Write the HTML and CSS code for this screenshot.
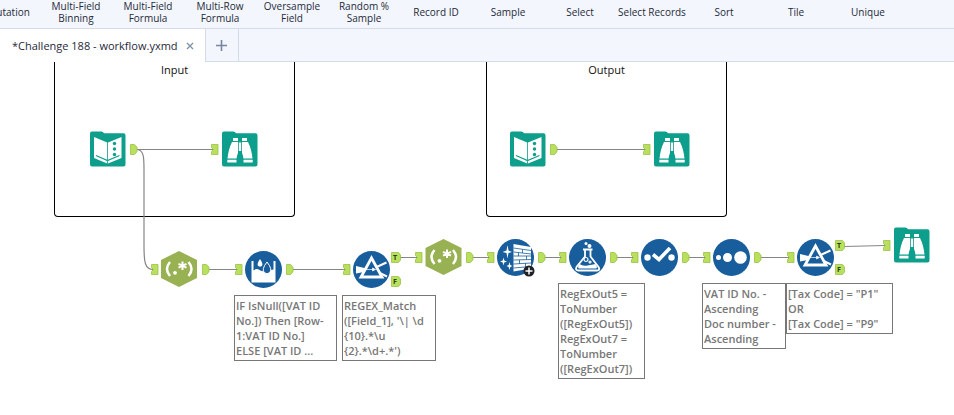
FILE: index.html
```html
<!DOCTYPE html>
<html lang="en">
<head>
<meta charset="utf-8">
<title>Challenge 188 - workflow.yxmd</title>
<link rel="stylesheet" href="styles.css">
</head>
<body>
<nav class="palette" aria-label="Tools">
  <button class="tool" type="button">Imputation</button>
  <button class="tool" type="button">Multi-Field Binning</button>
  <button class="tool" type="button">Multi-Field Formula</button>
  <button class="tool" type="button">Multi-Row Formula</button>
  <button class="tool" type="button">Oversample Field</button>
  <button class="tool" type="button">Random % Sample</button>
  <button class="tool" type="button">Record ID</button>
  <button class="tool" type="button">Sample</button>
  <button class="tool" type="button">Select</button>
  <button class="tool" type="button">Select Records</button>
  <button class="tool" type="button">Sort</button>
  <button class="tool" type="button">Tile</button>
  <button class="tool" type="button">Unique</button>
</nav>
<div class="tabs">
  <div class="tab">
    <span class="tab-name">*Challenge 188 - workflow.yxmd</span>
    <button class="tab-close" type="button" aria-label="Close tab">
      <svg width="8" height="8" viewBox="0 0 8 8"><path d="M1 1L7 7M7 1L1 7" stroke="#7d8fa8" stroke-width="1.3" fill="none"/></svg>
    </button>
  </div>
  <button class="tab-add" type="button" aria-label="New workflow">
    <svg width="11" height="11" viewBox="0 0 11 11"><path d="M5.5 0V11M0 5.5H11" stroke="#76879f" stroke-width="1.6" fill="none"/></svg>
  </button>
</div>
<main class="canvas">
  <section class="container container-input"><h2 class="container-title">Input</h2></section>
  <section class="container container-output"><h2 class="container-title">Output</h2></section>

  <svg class="graph" width="954" height="353" viewBox="0 62 954 353">
    <defs>
      <g id="out"><path d="M.5 .5H4.5L7 3.2V7.8L4.500 10.500H.5Z" fill="#b9e05c" stroke="#9cc04a" stroke-width=".8"/></g>
      <g id="in"><path d="M.5 .5H7V10.500H.5V7.500L2.500 5.500L.5 3.500Z" fill="#b9e05c" stroke="#9cc04a" stroke-width=".8"/></g>
      <g id="flag"><path d="M.5 .5H7.500L9.500 3V8L7.500 10.500H.5Z" fill="#b9e05c" stroke="#9cc04a" stroke-width=".8"/></g>
      <g id="folder"><path d="M0 2.500Q0 .5 2 .5H11.500Q13 .5 14 2.300H33.500Q35.500 2.300 35.500 4.300V33.500Q35.500 35.500 33.500 35.500H2Q0 35.500 0 33.500Z" fill="#0d9f8c"/></g>
      <g id="input">
        <use href="#folder"/>
        <path d="M4 6L17.200 11.500V32.500L4 27Z M18 11.500L31.500 6V27L18 32.500Z" fill="#fff"/>
        <path d="M6 24.500L17.500 29.500L29.500 24.500" fill="none" stroke="#0d9f8c" stroke-width="1.200"/>
        <g fill="#0d9f8c"><circle cx="24.500" cy="12.500" r="1.700"/><circle cx="24.500" cy="18" r="1.700"/><circle cx="24.500" cy="23.500" r="1.700"/></g>
      </g>
      <g id="browse">
        <use href="#folder"/>
        <path d="M11 7H16V10H11Z M20 7H25V10H20Z M10 11H16V22Q15 24 14.500 27.500H5.500Q6.500 18 10 11Z M20 11H26Q29.500 18 30.500 27.500H21.500Q21 24 20 22Z M16.800 11.500H19.200V20H16.800Z M5.300 28.700H14.500V31.500H5.300Z M21.500 28.700H30.700V31.500H21.500Z" fill="#fff"/>
      </g>
      <g id="regex">
        <path d="M0 -18L18 -9V9L0 18L-18 9V-9Z" fill="#98b153"/>
        <g fill="none" stroke="#fff" stroke-width="2.500">
          <path d="M-9 -7Q-15 0 -9 7M9.500 -7Q15.500 0 9.500 7"/>
          <path d="M3.500 -7.500V1M-.5 -5.200L7.500 -1.300M7.500 -5.200L-.5 -1.300" stroke-width="2"/>
        </g>
        <circle cx="-4" cy="3.800" r="1.900" fill="#fff"/>
      </g>
      <g id="multirow">
        <circle r="18.500" fill="#185d9c"/>
        <path d="M-12 -8.500H-10V1Q-7 -1.500 -4 .5T2 1.500T10 0V-8.500H12V13H-12Z" fill="#fff"/>
        <path d="M-3.500 -10.500Q-7 -5.500 -5.500 -3.800Q-3.500 -2 -1.500 -3.800Q0 -5.500 -3.500 -10.500Z" fill="#fff"/>
        <path d="M3.500 -7.500Q-2.500 0 1 3.200Q3.500 5.200 6 3.200Q9.500 0 3.500 -7.500Z" fill="#185d9c" stroke="#fff" stroke-width="1"/>
      </g>
      <g id="filter">
        <circle r="18.500" fill="#185d9c"/>
        <path d="M-15.500 -3.500L-5 -1V2L-15.500 4Z" fill="#fff"/>
        <path d="M4 -2L15 -7M5 2L15.500 7" stroke="#fff" stroke-width="2"/>
        <path d="M0 -11.500L10.500 7.500H-10.500Z" fill="#185d9c" stroke="#fff" stroke-width="2.800"/>
        <path d="M-6 0H1M1 -1.500L4 0L1 1.500Z" fill="#fff" stroke="#fff" stroke-width=".7"/>
      </g>
      <g id="cleanse">
        <circle r="18.500" fill="#185d9c"/>
        <path d="M-2 -13.500L15.500 -10.500V11L-2 14Z" fill="#fff"/>
        <path d="M-2 -9.500L15.500 -7M-2 -5.500L15.500 -3.500M-2 -1.500H15.500M-2 2.500L15.500 2M-2 6.500L15.500 5.500M-2 10.500L15.500 9M7 -8V-4.500M3 -5V-1.500M11 -1.500V2M4 2.500V6.500M10 5.500V9.500" stroke="#185d9c" stroke-width=".8" fill="none"/>
        <path d="M-8 -12.500L-7 -7L-3.500 -5.500L-7 -4.500L-8 1L-9 -4.500L-13 -5.500L-9 -7Z M-12 0L-11.200 3L-8.500 4L-11.200 5L-12 8L-12.800 5L-15.500 4L-12.800 3Z M-6 4.500L-5.200 7.500L-3 8.500L-5.200 9.500L-6 12.500L-6.800 9.500L-9 8.500L-6.800 7.500Z" fill="#fff"/>
        <circle cx="13.500" cy="13.500" r="5.500" fill="#1e2226"/>
        <path d="M13.500 10V17M10 13.500H17" stroke="#fff" stroke-width="1.500"/>
      </g>
      <g id="formula">
        <circle r="18.500" fill="#185d9c"/>
        <path d="M-4.500 -8H5M-2.500 -8V-1L-11 9.500Q-12.500 13 -9 13H9.500Q13 13 11 9.500L3 -1V-8" fill="#185d9c" stroke="#fff" stroke-width="1.800"/>
        <path d="M-8 6.500Q-4.500 9 0 8T8 6.500L9.500 9.500Q9.500 11 8 11H-8Q-9.500 11 -9.500 9.500Z" fill="#fff"/>
        <g fill="none" stroke="#fff" stroke-width="1.200"><circle cx="-1.500" cy="2" r="2"/><circle cx="2.500" cy="4.500" r="1"/></g>
        <g fill="#fff"><circle cx="-1.500" cy="-14" r="1.500"/><circle cx="2" cy="-11.500" r="2"/></g>
      </g>
      <g id="select">
        <circle r="18.500" fill="#185d9c"/>
        <circle cx="-12" cy="0" r="3.200" fill="#fff"/><circle cx="12" cy="0" r="3.200" fill="#fff"/>
        <path d="M-6.500 -3L-.5 2L10.500 -9.500" stroke="#fff" stroke-width="3.600" fill="none"/>
      </g>
      <g id="sort">
        <circle r="18.500" fill="#185d9c"/>
        <g fill="#fff"><circle cx="-13" cy="0" r="2.500"/><circle cx="-4" cy="0" r="4.500"/><circle cx="9" cy="0" r="6.300"/></g>
      </g>
    </defs>

    <g fill="none" stroke="#858585" stroke-width="1.200">
      <path d="M137 149.500H213M137 149.500C144 150 144 158 144 170V246C144 262 145 269.500 153 269.500"/>
      <path d="M557 149.500H645M208 269.500H237M292 269.500H345M400 257.500H417M473 257.500H489M545 257.500H561M617 257.500H633M689 257.500H705M761 257.500H789M844 246.500L885 245.500"/>
    </g>

    <use href="#input" x="90" y="131"/><use href="#out" x="130" y="144"/>
    <use href="#in" x="211" y="144"/><use href="#browse" x="222" y="131"/>
    <use href="#input" x="510" y="131"/><use href="#out" x="550" y="144"/>
    <use href="#in" x="643" y="144"/><use href="#browse" x="654" y="131"/>

    <use href="#in" x="151" y="264"/><use href="#regex" x="179" y="269"/><use href="#out" x="202" y="264"/>
    <use href="#in" x="235" y="264"/><use href="#multirow" x="263.500" y="269.500"/><use href="#out" x="286" y="264"/>
    <use href="#in" x="343" y="264"/><use href="#filter" x="371.500" y="269.500"/>
    <use href="#flag" x="391" y="252"/><use href="#flag" x="391" y="276"/>
    <use href="#in" x="415" y="252"/><use href="#regex" x="443.500" y="257"/><use href="#out" x="466" y="252"/>
    <use href="#in" x="487" y="252"/><use href="#cleanse" x="515.500" y="257.500"/><use href="#out" x="538" y="252"/>
    <use href="#in" x="559" y="252"/><use href="#formula" x="587.500" y="257.500"/><use href="#out" x="610" y="252"/>
    <use href="#in" x="631" y="252"/><use href="#select" x="659.500" y="257.500"/><use href="#out" x="682" y="252"/>
    <use href="#in" x="703" y="252"/><use href="#sort" x="731.500" y="257.500"/><use href="#out" x="754" y="252"/>
    <use href="#in" x="787" y="252"/><use href="#filter" x="815.500" y="257.500"/>
    <use href="#flag" x="835" y="240"/><use href="#flag" x="835" y="264"/>
    <use href="#in" x="883" y="240"/><use href="#browse" x="894" y="227"/>

    <g class="flag-text">
      <text x="395" y="260">T</text><text x="395" y="284">F</text>
      <text x="839" y="248">T</text><text x="839" y="272">F</text>
    </g>
  </svg>

  <p class="note note-multirow">IF IsNull([VAT ID
No.]) Then [Row-
1:VAT ID No.]
ELSE [VAT ID ...</p>
  <p class="note note-filter">REGEX_Match
([Field_1], '\| \d
{10}.*\u
{2}.*\d+.*')</p>
  <p class="note note-formula">RegExOut5 =
ToNumber
([RegExOut5])
RegExOut7 =
ToNumber
([RegExOut7])</p>
  <p class="note note-sort">VAT ID No. -
Ascending
Doc number -
Ascending</p>
  <p class="note note-tax">[Tax Code] = "P1"
OR
[Tax Code] = "P9"</p>
</main>
</body>
</html>
```

FILE: styles.css
```css
* {
  box-sizing: border-box;
}

body {
  margin: 0;
  min-height: 100vh;
  display: flex;
  flex-direction: column;
  overflow: hidden;
  background: #fff;
  color: #1f2a3a;
  font-family: "Open Sans", "Noto Sans", sans-serif;
}

button {
  margin: 0;
  padding: 0;
  border: 0;
  background: none;
  color: inherit;
  font: inherit;
}

.palette {
  display: grid;
  grid-template-columns: repeat(13, 72px);
  align-items: center;
  height: 29px;
  margin-left: -32px;
  padding-bottom: 4px;
  background: #f3f6fc;
  border-bottom: 1px solid #d3dce8;
}

.tool {
  font-size: 10px;
  line-height: 12px;
  text-align: center;
}

.tabs {
  display: flex;
  height: 33px;
  background: #f3f6fc;
  border-bottom: 1px solid #d3dce8;
}

.tab {
  display: flex;
  align-items: center;
  gap: 8px;
  height: 33px;
  padding: 0 11px 0 12px;
  background: #fff;
  font-size: 11px;
}

.tab-name {
  white-space: nowrap;
}

.tab-close {
  display: flex;
}

.tab-add {
  display: flex;
  align-items: center;
  justify-content: center;
  width: 34px;
  border: 1px solid #d3dce8;
  border-width: 0 1px;
}

.canvas {
  position: relative;
  flex: 1;
  overflow: hidden;
}

.container {
  position: absolute;
  top: 0;
  width: 241px;
  height: 155px;
  border: 1px solid #000;
  border-top: 0;
  border-radius: 0 0 4px 4px;
}

.container-input {
  left: 54px;
}

.container-output {
  left: 486px;
}

.container-title {
  margin: 0;
  color: #111;
  font-size: 11px;
  font-weight: 400;
  line-height: 16px;
  text-align: center;
}

.graph {
  position: absolute;
  top: 0;
  left: 0;
}

.flag-text {
  fill: #26400f;
  font-size: 7px;
  font-weight: 700;
  text-anchor: middle;
}

.note {
  position: absolute;
  margin: 0;
  padding: 2px 1px;
  border: 1px solid #777;
  background: #fff;
  color: #777;
  font-size: 11px;
  font-weight: 600;
  line-height: 15px;
  white-space: pre;
}

.note-multirow {
  top: 233px;
  left: 234px;
  width: 103px;
}

.note-filter {
  top: 233px;
  left: 342px;
  width: 94px;
}

.note-formula {
  top: 221px;
  left: 558px;
  width: 87px;
}

.note-sort {
  top: 221px;
  left: 702px;
  width: 84px;
}

.note-tax {
  top: 221px;
  left: 786px;
  width: 107px;
}
```
